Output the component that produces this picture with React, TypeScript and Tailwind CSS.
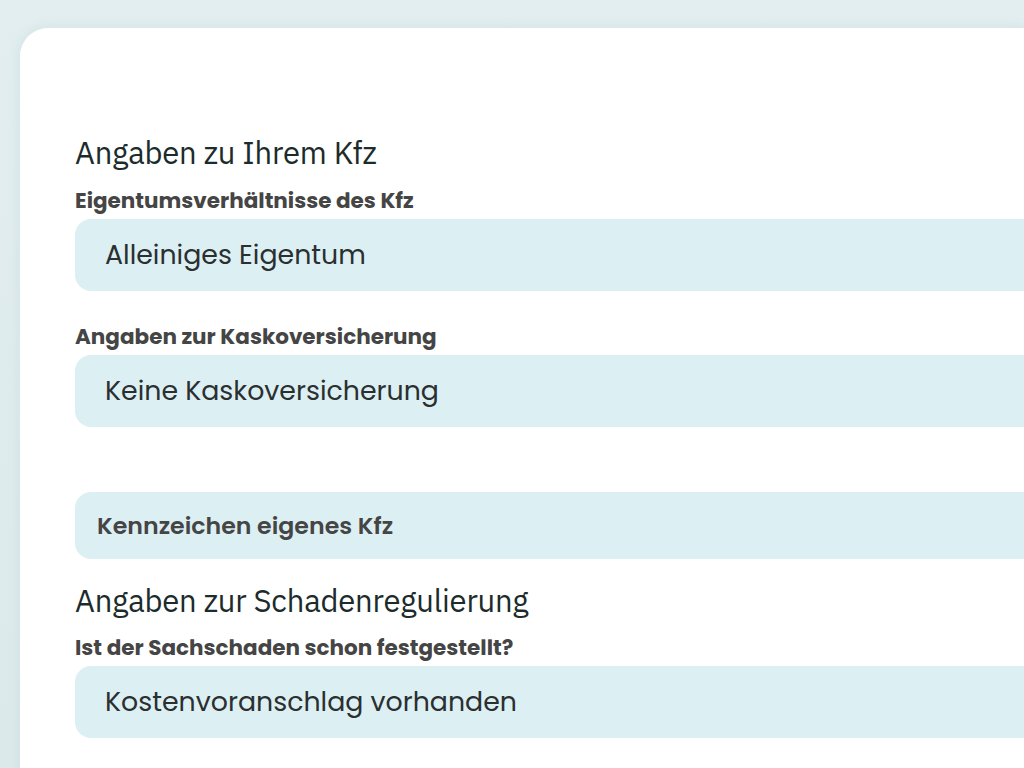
import React from 'react'

const heading = "font-['IBM_Plex_Sans','Open_Sans',sans-serif] text-[31px] leading-[36px] text-[#1c2b2b] tracking-[-0.2px]"
const label = "font-['Poppins','Lato',sans-serif] font-bold text-[21.5px] leading-[24px] text-[#454545]"
const box = 'h-[72px] rounded-l-[16px] bg-[#dcf0f4] flex items-center'
const value = "font-['Poppins','Lato',sans-serif] text-[26.8px] text-[#2b2f30] pl-[30px]"

function Field({ title, text, className }: { title: string; text: string; className?: string }) {
  return (
    <div className={className}>
      <p className={label}>{title}</p>
      <div className={`${box} mt-[6px]`}>
        <span className={value}>{text}</span>
      </div>
    </div>
  )
}

export default function App() {
  return (
    <div className="min-h-[768px] w-full overflow-hidden bg-gradient-to-b from-[#e2eef0] to-[#dce9eb]">
      <div className="ml-[20px] mt-[28px] h-[760px] rounded-tl-[28px] bg-white pl-[55px] pt-[107px] shadow-[0_0_12px_rgba(120,160,170,0.15)]">
        {/* Kfz */}
        <h2 className={heading}>Angaben zu Ihrem Kfz</h2>
        <Field title="Eigentumsverhältnisse des Kfz" text="Alleiniges Eigentum" className="mt-[18px]" />
        <Field title="Angaben zur Kaskoversicherung" text="Keine Kaskoversicherung" className="mt-[34px]" />

        <div className="mt-[65px] flex h-[67px] items-center rounded-l-[16px] bg-[#dcf0f4] pl-[22px]">
          <span className="font-['Poppins','Lato',sans-serif] text-[23.7px] font-semibold text-[#454545]">Kennzeichen eigenes Kfz</span>
        </div>

        {/* Schadenregulierung */}
        <h2 className={`${heading} mt-[24px]`}>Angaben zur Schadenregulierung</h2>
        <Field title="Ist der Sachschaden schon festgestellt?" text="Kostenvoranschlag vorhanden" className="mt-[17px]" />
      </div>
    </div>
  )
}
